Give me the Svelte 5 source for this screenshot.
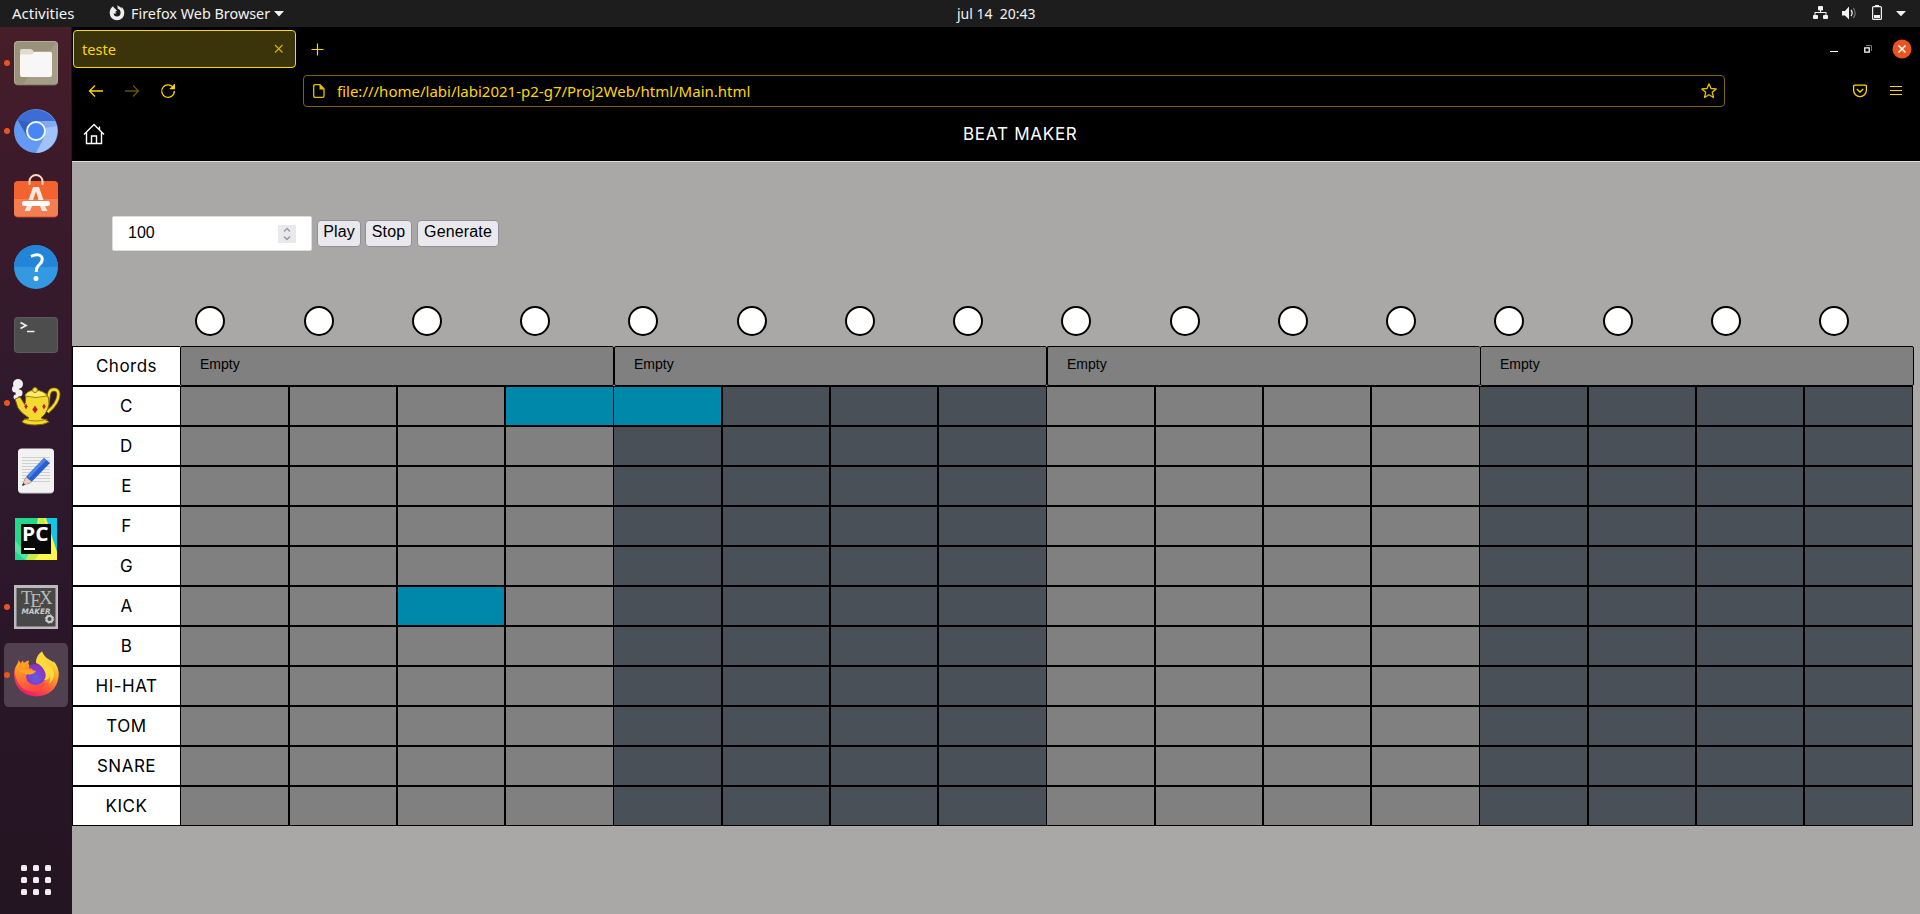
<script>
  const rows = ['C', 'D', 'E', 'F', 'G', 'A', 'B', 'HI-HAT', 'TOM', 'SNARE', 'KICK'];
  const steps = Array.from({ length: 16 }, (_, i) => i);
  const active = new Set(['C-3', 'C-4', 'A-2']);
  const running = new Set([0, 1, 5, 8, 9]);
  const dots = [0, 12, 24];
</script>

<div class="desktop">
  <div class="topbar">
    <span class="t activities">Activities</span>
    <svg class="ffmini" width="16" height="16" viewBox="0 0 16 16"><path d="M5.2 3.1 4 1.2C2 2.500 .7 5 .7 8a7.300 7.300 0 0 0 14.600 0c0-2.500-1-4.800-3-6.200l.3 2C11.500 2.200 10 1 8 .6c.7 1 .8 2 .6 3 1.900.6 3 2.200 3 4.200A3.700 3.700 0 0 1 8 11.500 3.400 3.400 0 0 1 4.600 8.300c1.100.7 2.300.4 2.900-.5-1 0-1.300-.8-.9-1.400.5-.4 1.300-.6 1.400-1.200-.8-.2-1.300-.4-1.500-1.200Z" fill="#eee"/></svg>
    <span class="t appname">Firefox Web Browser</span>
    <svg class="car1" width="10" height="6" viewBox="0 0 10 6"><path d="M0 0h10L5 5.500z" fill="#f2f2f2"/></svg>
    <span class="t clock">jul 14&nbsp; 20:43</span>
    <svg class="tray" width="100" height="27" viewBox="0 0 100 27">
      <g fill="#f2f2f2">
        <rect x="8" y="6" width="5" height="4.500" rx="1"/><rect x="3" y="15" width="5" height="4" rx="1"/><rect x="13" y="15" width="5" height="4" rx="1"/>
        <path d="M10 10h1v2h5.500v3h-1v-2h-10v2h-1v-3H10z"/>
        <path d="M32 11h3l4-4.500v13L35 15.500h-3z"/>
        <path d="M86 11h10l-5 5.200z"/>
      </g>
      <path d="M41 10q2.300 3 0 6" fill="none" stroke="#eee" stroke-width="1.300"/>
      <path d="M43.300 8q3.700 5 0 10" fill="none" stroke="#777" stroke-width="1.200"/>
      <rect x="62.600" y="6.600" width="8.800" height="12.800" rx="1" fill="none" stroke="#f2f2f2" stroke-width="1.200"/>
      <path d="M65 5h4v1.500h-4zM64 15h6v3h-6z" fill="#f2f2f2"/>
    </svg>
  </div>

  <div class="body">
    <aside class="dock">
      {#each steps.slice(0, 10) as i}
        <div class="slot" class:current={i === 9}>
          <svg width="72" height="68" viewBox="0 0 72 68">
            {#if running.has(i)}<circle cx="7" cy="34" r="3" fill="#e95420"/>{/if}
            {#if i === 0}
              <rect x="14" y="12.500" width="44" height="44" rx="4" fill="#6d6655"/>
              <rect x="14" y="12" width="44" height="43.500" rx="4" fill="#b5ae9b"/>
              <rect x="15" y="13" width="42" height="42" rx="3.500" fill="#999179"/>
              <path d="M57 13v42H23z" fill="#a49d87"/>
              <path d="M20 35V22q0-2 2-2h8q2 0 3 1.500l2.500 3.500H50z" fill="#e0dbd1"/>
              <path d="M20 27q0-1.500 1.500-1.500h9q2 0 3-1.500t3-1.200H50q2 0 2 2v21q0 2.200-2 2.200H22q-2 0-2-2.200z" fill="#f8f7f5"/>
            {:else if i === 1}
              <circle cx="36" cy="34" r="22" fill="#639af3"/>
              <path d="M17.300 22.500A22 22 0 0 1 54.700 24H36L27 38.500z" fill="#3c6cd4"/>
              <path d="M54.900 24A22 22 0 0 1 36 56L45 38.500 45.500 30 42 24z" fill="#a1c2fa"/>
              <path d="M18 23l9 17 5-14z" fill="#3158ac" opacity=".6"/><path d="M41 24h14l1 5-11 2z" fill="#6d9ae9" opacity=".6"/>
              <circle cx="36" cy="34" r="9" fill="#4686f5" stroke="#f1f5fd" stroke-width="2"/>
            {:else if i === 2}
              <path d="M29.500 19v-2.500a6.500 6.500 0 0 1 13 0V19" fill="none" stroke="#f5ddb8" stroke-width="2"/>
              <rect x="14" y="16.500" width="44" height="36" rx="4" fill="#bc4723"/>
              <rect x="14" y="16" width="44" height="35.500" rx="4" fill="#f26330"/>
              <path d="M14 34h44v14q0 3.500-4 3.500H18q-4 0-4-3.500z" fill="#f37e51"/>
              <path d="M29.500 19v-2.500M42.500 19v-2.500" stroke="#f5ddb8" stroke-width="2" stroke-linecap="round"/>
              <path d="M33 22h6l4.500 13h-5L36 26.500 33 35h-4.500zM27 41h5l-2 5h-5.500zM40 41h5l2.500 5H42z" fill="#fbe9df"/>
              <rect x="22" y="36" width="28" height="5" rx="2.500" fill="#fff"/>
            {:else if i === 3}
              <circle cx="36" cy="34" r="22" fill="#3498e2"/>
              <path d="M14 34a22 22 0 0 1 44 0z" fill="#2285d8"/>
              <path d="M31 23.300q8-3.300 10.500.5c2.800 4.500-1.500 7-3.500 9.300q-1.800 2-1.800 6" fill="none" stroke="#fff" stroke-width="3"/>
              <circle cx="36" cy="45.500" r="2.500" fill="#fff"/>
            {:else if i === 4}
              <rect x="14" y="16" width="44" height="36" rx="4" fill="#5c5c5b"/>
              <rect x="15" y="17" width="42" height="34" rx="3" fill="#4d4d4d"/>
              <path d="M20.500 21.500 26 24.500l-5.500 3" fill="none" stroke="#eee" stroke-width="1.800"/><path d="M27 30.500h7.500" stroke="#eee" stroke-width="1.500"/>
            {:else if i === 5}
              <g fill="#f0f0f0"><circle cx="18" cy="15" r="5"/><circle cx="15.500" cy="20" r="3.500"/><circle cx="19" cy="24" r="3.500"/><circle cx="16" cy="28" r="2.500"/></g>
              <path d="M47 38 49 25q1-4.500 5-4.500t4.500 4.500q0 9-11 18" fill="none" stroke="#806109" stroke-width="4"/>
              <path d="M47 38 49 25q1-4.500 5-4.500t4.500 4.500q0 9-11 18" fill="none" stroke="#f5df37" stroke-width="2.300"/>
              <path d="M15 30l5-2 5 8 1-10q9-5 21-1 5 10-2 20l-4 4q8 3 8 4-5 3-14 3t-13-3q0-2 7-4-8-5-11-10z" fill="#f4da2c" stroke="#806109"/>
              <path d="M25 27q1-5 10-6 10 1 12 6-11 3-22 0z" fill="#ffec65" stroke="#a5810e"/><circle cx="35" cy="21" r="2.500" fill="#f8e659" stroke="#967209"/>
              <path d="M24 50q13 4 23 0" fill="none" stroke="#a5810e"/>
              <path d="M26 34l2 3.500-2 3.500-2-3.500zM35 36l3 4.500-3 4.500-3-4.500zM44 34l2 3.500-2 3.500-2-3.500z" fill="#c41b16" stroke="#fff092" stroke-width=".5"/>
            {:else if i === 6}
              <rect x="18" y="12" width="36" height="44.500" rx="4" fill="#c9c9c9"/><rect x="18" y="11.500" width="36" height="44" rx="4" fill="#f2f2f1"/>
              <path d="M22 20.500h28M22 23.500h28M22 26.500h28M22 29.500h28M22 32.500h28M22 35.500h28M22 38.500h28M22 41.500h28M22 44.500h28" stroke="#cfcfcf"/>
              <path d="M22 49l3.200-8L44 21l6 5-19.500 20z" fill="#275fd0"/><path d="M27 38.500 44 21l2.500 2L29.300 41z" fill="#4c82e7"/>
              <path d="M22 49l4-9 6 5z" fill="#efcba8"/><path d="M22 49l1.200-3.200 2 1.800z" fill="#333"/>
            {:else if i === 7}
              <rect x="15" y="13" width="42" height="42" fill="#22d88f"/>
              <path d="M42 13h15v35L38 20z" fill="#13c6e6"/><path d="M38 13h8l11 34v8H31z" fill="#e8f24c"/><path d="M15 35l16 20h-6L15 46z" fill="#55e2a4"/><path d="M26 55l14-42h4l7 42z" fill="#c4ec4b"/><path d="M51 30l6 18v7H35z" fill="#fcf84a"/>
              <rect x="21" y="19" width="30" height="30" fill="#080808"/>
              <text x="22" y="35.500" font-family="Open Sans, sans-serif" font-weight="700" font-size="19" textLength="26.500" lengthAdjust="spacingAndGlyphs" fill="#fff">PC</text><path d="M24 43h11v2H24z" fill="#fff"/>
            {:else if i === 8}
              <rect x="14" y="12" width="44" height="44" fill="#bbb"/><rect x="16.500" y="15" width="39" height="38.500" fill="#484848"/>
              <text x="21" y="30.500" font-family="Liberation Serif, serif" font-size="18.500" fill="#bbb">T<tspan dx="-2" dy="3">E</tspan><tspan dx="-2.500" dy="-3">X</tspan></text>
              <text x="21.500" y="41" font-family="DejaVu Sans, sans-serif" font-style="italic" font-weight="700" font-size="7.500" textLength="29" lengthAdjust="spacingAndGlyphs" fill="#ccc">MAKER</text>
              <circle cx="49.500" cy="46" r="3" fill="none" stroke="#ccc" stroke-width="2"/><circle cx="49.500" cy="46" r="4.300" fill="none" stroke="#ccc" stroke-dasharray="1.600 1.780"/>
            {:else}
              <defs>
                <linearGradient id="fx" x1=".8" y1="0" x2=".25" y2="1"><stop offset="0" stop-color="#fff44f"/><stop offset=".35" stop-color="#ffad2d"/><stop offset=".65" stop-color="#ff5a38"/><stop offset="1" stop-color="#e5127a"/></linearGradient>
                <linearGradient id="fy" x1="0" y1="0" x2=".4" y2="1"><stop offset="0" stop-color="#ffb81c"/><stop offset="1" stop-color="#ff4940"/></linearGradient>
                <radialGradient id="fg" cx=".5" cy=".65"><stop offset="0" stop-color="#5d60e0"/><stop offset="1" stop-color="#8b32c7"/></radialGradient>
              </defs>
              <path d="M42 10.500q2 5 7 8t5 3l-1-2q7 7 5.500 17-3 18-22.500 19-21-2-22-22 0-6 3-10l2-5q0 3 1 4l3-3 1 3q2-3 5-3l-1 5q6 0 7 4l4 1q4-1 3-5-5-3-5-6 0-5 5-8z" fill="url(#fx)"/>
              <circle cx="35.500" cy="33.500" r="10.500" fill="url(#fg)"/>
              <path d="M42 10.500q-7 6.500-6 11.500 6 2 9 9 2 5-1 8 5 0 6-4 1 5-2 8 6-3 6-11-1-5-5-9-6-6-7-12.500z" fill="#ffd83c"/>
              <path d="M15 32q0-6 2-8l3-4 .5 4 4-3 .5 4q2-2 4-2v4q3 0 5 3-1 3-5 3-3 0-3 3 1 8 10 8.500 6 0 9-5 0 9-9 11-18 1-21-18.500z" fill="url(#fy)"/>
              <path d="M19 30q5-2 10-1 4 1 7 .5-1 3.500-6 4-6 0-11-3.500z" fill="#ffa41f"/>
            {/if}
          </svg>
        </div>
      {/each}
      <div class="apps">
        <svg width="72" height="32" viewBox="0 0 72 32">
          {#each dots as dx}{#each dots as dy}<rect x={21 + dx} y={1 + dy} width="6" height="6" rx="1.500" fill="#f0eeee"/>{/each}{/each}
        </svg>
      </div>
    </aside>

    <main>
      <div class="browser">
        <div class="tabs">
          <div class="tab"><span class="t tabname">teste</span>
            <svg width="10" height="10" viewBox="0 0 10 10"><path d="M1 1l7.500 7.500M8.500 1 1 8.500" stroke="#d8b800" stroke-width="1.100"/></svg>
          </div>
          <svg class="plus" width="13" height="13" viewBox="0 0 13 13"><path d="M6.500 .5v12M.5 6.500h12" stroke="#ffd700" stroke-width="1.200"/></svg>
          <svg class="win" width="110" height="38" viewBox="0 0 110 38">
            <path d="M20 21.500h8" stroke="#fff"/>
            <path d="M56 15.500h5.500V21" fill="none" stroke="#777"/>
            <path d="M54.800 17.800h4.400v4.400h-4.400z" fill="none" stroke="#fff" stroke-width="1.300"/>
            <circle cx="92" cy="19" r="9.500" fill="#e95420"/><path d="M88.500 15.500l7 7M95.500 15.500l-7 7" stroke="#fff" stroke-width="1.500"/>
          </svg>
        </div>
        <div class="nav">
          <svg class="arrows" width="100" height="20" viewBox="0 0 100 20" fill="none" stroke="#ffd700" stroke-width="1.300">
            <path d="M7 4.500 1.500 10 7 15.500M1.500 10H15"/>
            <path d="M45 4.500l5.500 5.500-5.500 5.500M50.500 10H37" stroke="#665600"/>
            <path d="M85.600 7.200A6.300 6.300 0 1 0 86.300 10M86.300 3v4.500H81.800"/><path d="M86.300 3.500v4h-4z" fill="#ffd700" stroke="none"/>
          </svg>
          <div class="url">
            <svg width="14" height="16" viewBox="0 0 14 16"><path d="M1.700 3q0-1.300 1.300-1.300h5l4 4V13q0 1.300-1.300 1.300H3Q1.700 14.300 1.700 13z" fill="none" stroke="#e5c200" stroke-width="1.300"/><path d="M7.500 1.500v5h5z" fill="#e5c200"/></svg>
            <span class="t address">file:///home/labi/labi2021-p2-g7/Proj2Web/html/Main.html</span>
            <svg class="star" width="18" height="18" viewBox="0 0 18 18"><path d="M9 1.800l2 4.700 5.200.4-3.900 3.400 1.200 5.200L9 12.800l-4.500 2.700 1.200-5.200L1.800 6.900 7 6.500z" fill="none" stroke="#e5c200" stroke-width="1.300" stroke-linejoin="round"/></svg>
          </div>
          <svg class="pocket" width="16" height="14" viewBox="0 0 16 14" fill="none" stroke="#ffd700" stroke-width="1.300"><path d="M1.600 2.200q0-1 1-1h10.800q1 0 1 1v4a6.400 6.400 0 0 1-12.800 0z"/><path d="M4.800 5 8 8l3.200-3"/></svg>
          <svg class="burger" width="12" height="12" viewBox="0 0 12 12"><path d="M0 1.500h12M0 5.500h12M0 9.500h12" stroke="#ffd700" stroke-width="1.200"/></svg>
        </div>
        <div class="header">
          <svg width="22" height="22" viewBox="0 0 22 22" fill="none" stroke="#fff" stroke-width="1.400"><path d="M1 11.500 11 1.500l10 10M3.500 9.500V20.500h15V9.500M8.500 20v-7h5v7M16.500 3.500v3.500"/></svg>
          <h1 class="t">BEAT MAKER</h1>
        </div>
      </div>

      <div class="controls">
        <div class="number"><span class="t">100</span>
          <svg width="18" height="18" viewBox="0 0 18 18"><path d="M0 0h18v18H0z" fill="#e9e9ed"/><path d="M6 6.500l3-3 3 3M6 11.500l3 3 3-3" fill="none" stroke="#9797a1" stroke-width="1.400"/></svg>
        </div>
        <button style:width="44px">Play</button>
        <button style:width="47px">Stop</button>
        <button style:width="82px">Generate</button>
      </div>

      <div class="grid lights">
        <span></span>
        {#each steps as s}<i class="light"></i>{/each}
      </div>
      <div class="board">
        <div class="chords">
          <div class="label t">Chords</div>
          {#each [0, 1, 2, 3] as c}<div class="chord">Empty</div>{/each}
        </div>
        {#each rows as r}
          <div class="grid">
            <div class="label t">{r}</div>
            {#each steps as s}
              <div class="cell" class:dark={s % 8 > 3} class:on={active.has(`${r}-${s}`)} class:edge={s % 4 === 3 && s !== 15}></div>
            {/each}
          </div>
        {/each}
      </div>
    </main>
  </div>
</div>

<style>
  :global(body) { margin: 0; overflow: hidden; }
  * { box-sizing: border-box; }
  svg { display: block; flex: none; }
  .t { white-space: nowrap; }
  .desktop { width: 1920px; height: 914px; display: flex; flex-direction: column; overflow: hidden; font-family: "Noto Sans", sans-serif; }
  .topbar { height: 27px; flex: none; background: #1d1d1d; color: #f2f2f2; display: flex; align-items: center; font-size: 14px; padding-bottom: 1px; }
  .activities { margin-left: 12px; width: 97px; font-size: 15px; }
  .appname { margin-left: 6px; width: 143px; font-size: 14.4px; }
  .car1 { margin-top: 1px; }
  .clock { margin-left: 673px; width: 90px; }
  .tray { margin-left: auto; margin-right: 10px; margin-top: 1px; }
  .body { display: flex; flex: 1; }
  .dock { width: 72px; padding-top: 2px; background: linear-gradient(#471e2a 0, #3d1a29 15%, #311a2e 40%, #2b162a 65%, #241522 100%); border-right: 1px solid #241420; display: flex; flex-direction: column; }
  .slot { width: 72px; height: 68px; padding: 2px 4px; }
  .slot svg { margin: -2px -4px; }
  .current { background: content-box #504050; background-clip: content-box; border-radius: 8px; }
  .apps { margin-top: 155px; }
  main { flex: 1; background: #a9a8a6; min-width: 0; }
  .browser { height: 135px; background: #000; border-bottom: 1px solid #dcdcdc; }
  .tabs { height: 44px; padding: 3px 0 0 1px; display: flex; align-items: flex-start; }
  .tab { width: 223px; height: 38px; border: 1px solid #ffd700; border-radius: 4px; background: #3b330a; color: #ffd700; display: flex; align-items: center; justify-content: space-between; padding: 0 11px 0 8px; font-size: 14.6px; }
  .plus { margin: 13px 0 0 15px; }
  .win { margin-left: auto; }
  .nav { height: 40px; display: flex; align-items: center; }
  .arrows { margin-left: 16px; }
  .url { margin-left: 115px; width: 1422px; height: 32px; border: 1px solid #7a6700; border-radius: 4px; display: flex; align-items: center; padding: 0 6px 0 8px; color: #ffd700; font-size: 15px; }
  .address { margin-left: 11px; }
  .star { margin-left: auto; }
  .pocket { margin-left: 127px; }
  .burger { margin-left: 22px; }
  .header { height: 50px; display: flex; align-items: center; padding: 0 0 4px 11px; color: #fff; }
  h1 { margin: 0 0 1px 858px; font: 400 17px Inter, sans-serif; letter-spacing: .75px; }
  .controls { display: flex; align-items: center; padding: 54px 0 0 40px; height: 89px; font-family: "Liberation Sans", Arial, sans-serif; font-size: 16px; color: #000; }
  .number { width: 200px; height: 35px; flex: none; margin-right: 5px; padding: 0 15px; background: #fff; border: 1px solid #ddd; border-radius: 2px; display: flex; align-items: center; justify-content: space-between; }
  .number span { padding-bottom: 2px; }
  button { height: 27px; margin: 0 4px 0 0; padding: 0 0 3px; font: inherit; letter-spacing: .15px; color: #000; background: #e9e9ed; border: 1px solid #8f8f9d; border-radius: 4px; }
  button + button { margin-right: 5px; }
  .grid { display: grid; grid-template-columns: 108px repeat(3, 109px 108px 108px 108px) 109px 108px 108px 109px; width: 1841px; height: 40px; }
  .lights { margin-top: 55px; }
  .light { width: 30px; height: 30px; margin-left: 15px; border: 2px solid #000; border-radius: 50%; background: #fff; }
  .label { border: 1px solid #000; border-right: 0; background: #fff; color: #000; display: flex; align-items: center; justify-content: center; font: 400 17px Inter, sans-serif; letter-spacing: .5px; padding-bottom: 1px; }
  .chords { display: grid; grid-template-columns: 108px 434px 433px 433px 434px; height: 40px; }
  .chord { border: 1px solid #000; border-radius: 2px; background: #808080; padding: 9px 0 0 19px; font: 14px/17px "Liberation Sans", Arial, sans-serif; color: #000; }
  .chord:nth-child(4) { border-right: 0; }
  .cell { border: 1px solid #000; background: #808080; }
  .dark { background: #495057; }
  .on { background: #0088aa; }
  .edge { border-right: 0; }
</style>
